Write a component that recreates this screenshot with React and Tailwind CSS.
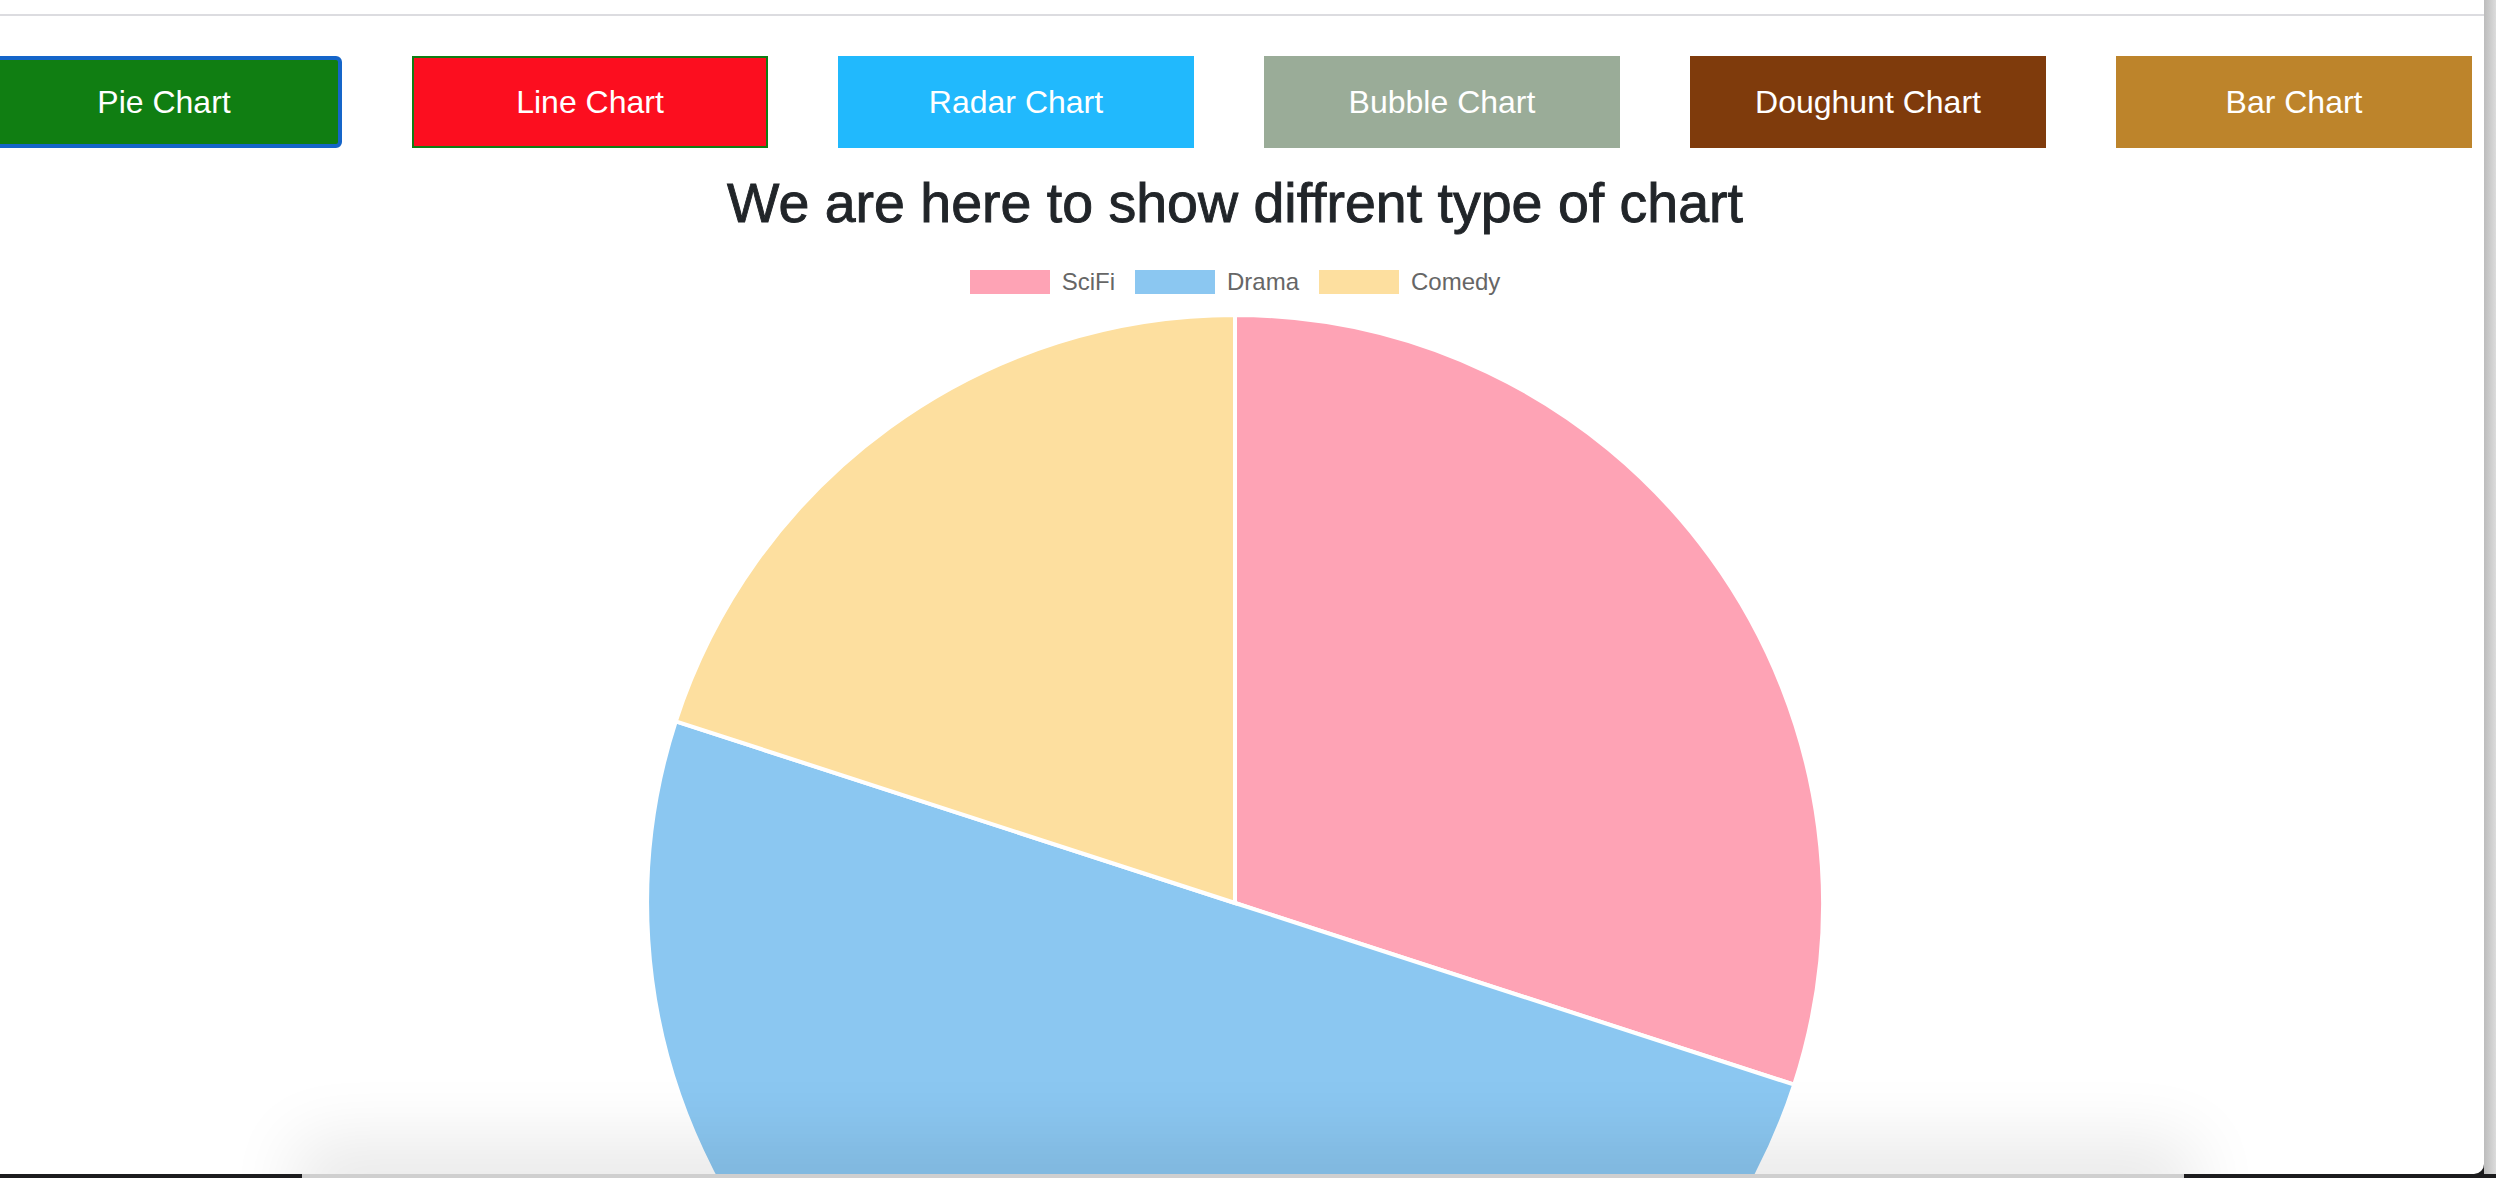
import React from "react";

const charts = [
  { label: "Pie Chart", cls: "bg-[#107e12] border-4 border-[#1565c9] rounded-[6px]" },
  { label: "Line Chart", cls: "bg-[#fc0e1f] border-2 border-[#0f7d14]" },
  { label: "Radar Chart", cls: "bg-[#21b9fd]" },
  { label: "Bubble Chart", cls: "bg-[#9aac98]" },
  { label: "Doughunt Chart", cls: "bg-[#7f3b0c]" },
  { label: "Bar Chart", cls: "bg-[#bd842b]" },
];

const legend = [
  { label: "SciFi", color: "bg-[#fea3b5]" },
  { label: "Drama", color: "bg-[#8bc7f1]" },
  { label: "Comedy", color: "bg-[#fddf9f]" },
];

// slices: SciFi 3, Drama 5, Comedy 2
const data = [
  { value: 3, fill: "#fea3b5" },
  { value: 5, fill: "#8bc7f1" },
  { value: 2, fill: "#fddf9f" },
];

const PieChart = () => {
  const cx = 600;
  const cy = 600;
  const r = 588;
  const total = data.reduce((s, d) => s + d.value, 0);
  let start = 0;
  const pt = (a) => [cx + r * Math.sin(a), cy - r * Math.cos(a)];
  return (
    <svg width="1200" height="1200" viewBox="0 0 1200 1200" className="block shrink-0">
      {data.map((d, i) => {
        const end = start + (d.value / total) * Math.PI * 2;
        const [x1, y1] = pt(start);
        const [x2, y2] = pt(end);
        const large = end - start > Math.PI + 0.0001 ? 1 : 0;
        const path = `M${cx} ${cy} L${x1} ${y1} A${r} ${r} 0 ${large} 1 ${x2} ${y2} Z`;
        start = end;
        return <path key={i} d={path} fill={d.fill} stroke="#fff" strokeWidth="4" />;
      })}
    </svg>
  );
};

export default function App() {
  return (
    <div className="relative w-[2496px] h-[1178px] overflow-hidden bg-[#1c1c1e] font-['Liberation_Sans',Arial,sans-serif]">
      <div className="flex h-[1174px]">
        <main className="relative w-[2484px] h-full bg-white overflow-hidden rounded-br-[10px]">
          <div className="h-[14px]" />
          <div className="h-[2px] bg-[#dcdce0]" />

          {/* chart type buttons */}
          <div className="flex gap-[70px] -ml-[14px] mt-[40px]">
            {charts.map((c) => (
              <button
                key={c.label}
                className={`w-[356px] h-[92px] shrink-0 flex items-center justify-center text-white text-[32px] ${c.cls}`}
              >
                {c.label}
              </button>
            ))}
          </div>

          <div className="w-[2470px] flex flex-col items-center">
            <h3 className="mt-[23px] text-[55.5px] leading-[64px] font-medium text-[#212529] [-webkit-text-stroke:0.9px_#212529]">
              We are here to show diffrent type of chart
            </h3>

            {/* legend */}
            <div className="mt-[35px] flex items-center h-[24px] gap-[20px]">
              {legend.map((l) => (
                <div key={l.label} className="flex items-center">
                  <span className={`w-[80px] h-[24px] ${l.color}`} />
                  <span className="ml-[12px] text-[24px] leading-[24px] text-[#666]">{l.label}</span>
                </div>
              ))}
            </div>

            <div className="mt-[9px]">
              <PieChart />
            </div>
          </div>

          {/* soft shadow cast from below */}
          <div className="pointer-events-none absolute bottom-[-24px] left-[330px] w-[1830px] h-[24px] shadow-[0_0_70px_34px_rgba(0,0,0,0.09)]" />
        </main>
        <div className="w-[12px] h-full bg-gradient-to-r from-[#bcbcbc] to-[#dcdcdc]" />
      </div>
      <div className="flex h-[4px]">
        <div className="w-[302px] bg-[#1c1c1e]" />
        <div className="w-[1882px] bg-[#cfcfcf]" />
        <div className="flex-1 bg-[#1c1c1e]" />
      </div>
    </div>
  );
}
